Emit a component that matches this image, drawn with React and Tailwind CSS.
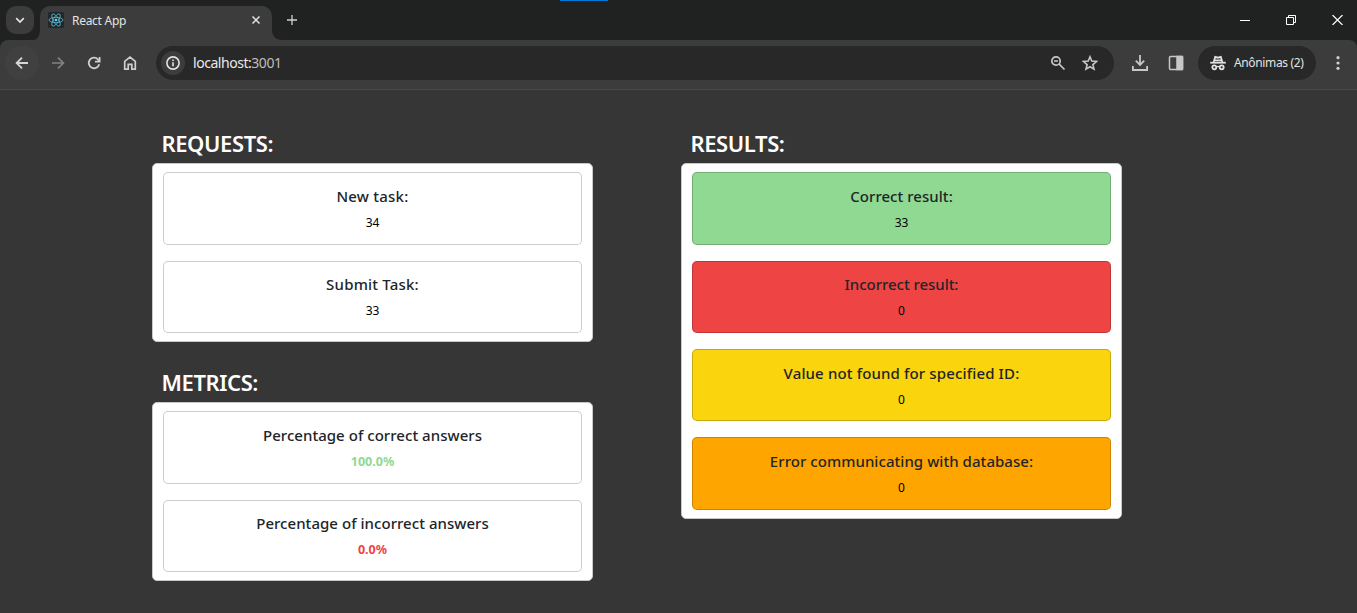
import React from "react";

const glyph = "block shrink-0";

function ReactLogo() {
  return (
    <span className="flex h-4 w-4 shrink-0 items-center justify-center rounded-[2px] bg-[#222628]">
      <svg className={glyph} width="16" height="16" viewBox="-12 -12 24 24" fill="none" stroke="#58b9d0" strokeWidth="1.2">
        <circle r="2" fill="#61dafb" stroke="none" />
        <ellipse rx="10.5" ry="4" />
        <ellipse rx="10.5" ry="4" transform="rotate(60)" />
        <ellipse rx="10.5" ry="4" transform="rotate(120)" />
      </svg>
    </span>
  );
}

function TabStrip() {
  return (
    <div className="relative flex h-10 shrink-0 bg-[#202221]">
      <div className="absolute left-[560px] top-0 h-px w-12 bg-[#0078d7]" />
      <button className="ml-1.5 mt-1.5 flex h-7 w-7 items-center justify-center rounded-[10px] bg-[#3c3c3c]">
        <svg className={glyph} width="10" height="10" viewBox="0 0 10 10" fill="none" stroke="#e3e3e3" strokeWidth="1.7">
          <path d="M1.2 3.2 5 7 8.8 3.2" />
        </svg>
      </button>
      <svg className="mt-auto block h-2.5 w-1.5 shrink-0" viewBox="0 0 6 10" fill="#3c3c3c">
        <path d="M6 0v10H0C4 9 6 5 6 0Z" />
      </svg>
      <div className="mt-1.5 flex w-[232px] items-center rounded-t-[10px] bg-[#3c3c3c] pb-1.5 pl-2 pr-[11px]">
        <ReactLogo />
        <span className="ml-2 mt-0.5 grow whitespace-nowrap text-xs tracking-[-0.28px] text-[#e3e3e3]">React App</span>
        <svg className={glyph} width="10" height="10" viewBox="0 0 10 10" stroke="#e3e3e3" strokeWidth="1.5">
          <path d="m1.5 1.5 7 7m0-7-7 7" />
        </svg>
      </div>
      <svg className="mt-auto block h-2.5 w-2.5 shrink-0" viewBox="0 0 10 10" fill="#3c3c3c">
        <path d="M0 0v10h10C4 10 0 6 0 0Z" />
      </svg>
      <svg className="ml-[5px] mt-[15px] block" width="10" height="10" viewBox="0 0 10 10" stroke="#d0d0d0" strokeWidth="1.3">
        <path d="M5 0v10M0 5h10" />
      </svg>
      <div className="ml-auto mr-[14px] mt-[15px] flex gap-9">
        <svg className={glyph} width="10" height="11" viewBox="0 0 10 11" stroke="#fff">
          <path d="M0 5.5h10" />
        </svg>
        <svg className={glyph} width="10" height="10" viewBox="0 0 10 10" fill="none" stroke="#fff">
          <path d="M.5 2.5h7v7h-7zM2.5 2.5v-2h7v7h-2" />
        </svg>
        <svg className={glyph} width="11" height="10" viewBox="0 0 11 10" stroke="#fff" strokeWidth="1.2">
          <path d="m.5 0 10 10m0-10-10 10" />
        </svg>
      </div>
    </div>
  );
}

function Toolbar() {
  return (
    <div className="bg-[#202221]">
      <div className="flex h-[50px] items-center rounded-t-lg border-b border-[#4a4a4a] bg-[#3c3c3c] pb-[3px]">
        <span className="ml-[5px] flex h-[34px] w-[34px] items-center justify-center rounded-full bg-[#404040]">
          <svg className={glyph} width="16" height="16" viewBox="0 0 16 16" fill="none" stroke="#d5d5d5" strokeWidth="1.8">
            <path d="M14 8H3M8 2.6 2.6 8 8 13.4" />
          </svg>
        </span>
        <svg className="ml-[11px] block" width="16" height="16" viewBox="0 0 16 16" fill="none" stroke="#828282" strokeWidth="1.7">
          <path d="M2 8h11M8 2.6 13.4 8 8 13.4" />
        </svg>
        <svg className="ml-5 block" width="16" height="16" viewBox="0 0 16 16" fill="none" stroke="#cfcfcf" strokeWidth="1.8">
          <path d="M13.2 9.2A5.3 5.3 0 1 1 11.9 4.3L13.4 6" />
          <path d="M13.6 2v4.6H9" />
        </svg>
        <svg className="ml-5 block" width="16" height="16" viewBox="0 0 16 16" fill="none" stroke="#cfcfcf" strokeWidth="1.7">
          <path d="M2.7 14.2V6.4L8 2.2l5.3 4.2v7.8H9.8V9.4H6.2v4.8Z" />
        </svg>
        <div className="ml-[18px] flex h-[34px] w-[958px] items-center rounded-full bg-[#282828] pl-[5px] pr-4">
          <span className="flex h-6 w-6 items-center justify-center rounded-full bg-[#3c3c3c]">
            <svg className={glyph} width="16" height="16" viewBox="0 0 16 16" fill="none" stroke="#e3e3e3" strokeWidth="1.6">
              <circle cx="8" cy="8" r="6.1" />
              <path d="M8 7.2v4M8 4.4v1.7" />
            </svg>
          </span>
          <span className="ml-2 whitespace-nowrap text-sm tracking-[-0.46px] text-[#e8e8e8]">
            localhost:<span className="text-[#bdbdbd]">3001</span>
          </span>
          <svg className="ml-auto block" width="16" height="16" viewBox="0 0 16 16" fill="none" stroke="#c7c7c7" strokeWidth="1.7">
            <circle cx="6" cy="6" r="4.2" />
            <path d="m9.2 9.2 5.3 5.3M4 6h4" />
          </svg>
          <svg className="ml-4 block" width="16" height="16" viewBox="0 0 16 16" fill="none" stroke="#c7c7c7" strokeWidth="1.6">
            <path d="m8 1.8 1.8 4.3 4.7.4-3.6 3.1 1.1 4.6L8 11.8l-4 2.4 1.1-4.6L1.5 6.5l4.7-.4Z" />
          </svg>
        </div>
        <svg className="ml-[18px] block" width="16" height="16" viewBox="0 0 16 16" fill="none" stroke="#c7c7c7" strokeWidth="1.8">
          <path d="M8 0v9.5M3.800 5.700 8 9.900l4.200-4.200M.9 11v4h14.200v-4" />
        </svg>
        <svg className="ml-5 block" width="16" height="16" viewBox="0 0 16 16" fill="none" stroke="#c7c7c7" strokeWidth="1.5">
          <rect x="1.5" y="1.5" width="13" height="13" rx="1" />
          <path d="M9 1.500h5.500v13H9Z" fill="#c7c7c7" />
        </svg>
        <div className="ml-3.5 flex h-[34px] w-[118px] items-center rounded-full bg-[#282828] pl-3">
          <svg className={glyph} width="16" height="16" viewBox="0 0 16 16" fill="none" stroke="#e3e3e3" strokeWidth="1.8">
            <path d="M.2 7.700h15.600" />
            <path d="M3.700 6.900 5.200 1.800 8 2.700l2.800-.9 1.500 5.100M4.200 5.300h7.600" />
            <circle cx="4.300" cy="12.300" r="2" />
            <circle cx="11.700" cy="12.300" r="2" />
            <path d="M6.400 11.900q1.600-.9 3.200 0" strokeWidth="1.300" />
          </svg>
          <span className="ml-2 whitespace-nowrap text-xs tracking-[-0.36px] text-[#e3e3e3]">Anônimas (2)</span>
        </div>
        <svg className="ml-[14px] block" width="16" height="16" viewBox="0 0 16 16" fill="#cfcfcf">
          <circle cx="8" cy="2.700" r="1.600" />
          <circle cx="8" cy="8" r="1.600" />
          <circle cx="8" cy="13.300" r="1.600" />
        </svg>
      </div>
    </div>
  );
}

function Stat({ label, value, tone = "bg-white", valueTone = "text-black", labelTone = "tracking-[0.04px]" }) {
  return (
    <div className={`flex h-[72.33px] flex-col items-center rounded-[5px] border border-black/20 pt-[10.7px] ${tone}`}>
      <h5 className={`whitespace-nowrap text-[15px] font-medium leading-6 text-[#212529] ${labelTone}`}>{label}</h5>
      <p className={`mt-[5px] whitespace-nowrap leading-[19px] ${valueTone} ${valueTone === "text-black" ? "text-xs" : "text-[12.5px]"}`}>{value}</p>
    </div>
  );
}

function Section({ title, children }) {
  return (
    <section>
      <h2 className="ml-[9.5px] h-[37px] whitespace-nowrap text-[22px] font-semibold leading-[34px] tracking-[-0.4px] text-white">{title}</h2>
      <div className="flex flex-col gap-4 rounded-[5px] border border-[#c8c8c8] bg-white px-2.5 pb-2 pt-[8.3px]">{children}</div>
    </section>
  );
}

export default function App() {
  return (
    <div className="flex h-[613px] w-[1357px] flex-col overflow-hidden bg-[#363636] font-['Noto_Sans','Open_Sans',sans-serif]">
      <TabStrip />
      <Toolbar />
      <main className="flex grow items-start gap-[88px] pl-[152px] pt-9">
        <div className="flex w-[441px] flex-col gap-[23px]">
          <Section title="REQUESTS:">
            <Stat label="New task:" value="34" labelTone="tracking-[0.22px]" />
            <Stat label="Submit Task:" value="33" labelTone="tracking-[0.2px]" />
          </Section>
          <Section title="METRICS:">
            <Stat label="Percentage of correct answers" value="100.0%" valueTone="font-bold text-[#8fd992]" />
            <Stat label="Percentage of incorrect answers" value="0.0%" valueTone="font-bold text-[#ef4444]" />
          </Section>
        </div>
        <div className="w-[441px]">
          <Section title="RESULTS:">
            <Stat label="Correct result:" value="33" tone="bg-[#8fd992]" />
            <Stat label="Incorrect result:" value="0" tone="bg-[#ef4444]" labelTone="tracking-[-0.04px]" />
            <Stat label="Value not found for specified ID:" value="0" tone="bg-[#fad40c]" labelTone="tracking-[0.14px]" />
            <Stat label="Error communicating with database:" value="0" tone="bg-[#ffa500]" labelTone="tracking-[0.05px]" />
          </Section>
        </div>
      </main>
    </div>
  );
}
